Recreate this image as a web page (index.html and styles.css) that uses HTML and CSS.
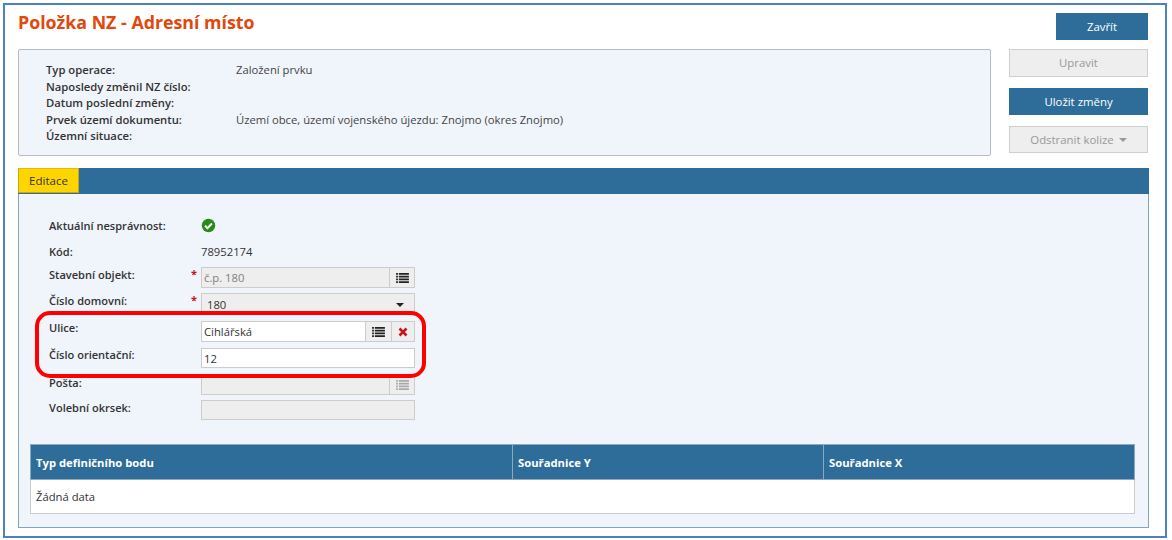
FILE: index.html
```html
<!DOCTYPE html>
<html lang="cs">
<head>
<meta charset="utf-8">
<title>Položka NZ - Adresní místo</title>
<link rel="stylesheet" href="styles.css">
</head>
<body>
<svg class="defs" width="0" height="0" aria-hidden="true">
  <symbol id="list" viewBox="0 0 14 12"><path d="M0 1h2v2H0zM3 1h11v2H3zM0 4h2v2H0zM3 4h11v2H3zM0 7h2v2H0zM3 7h11v2H3zM0 10h2v2H0zM3 10h11v2H3z"/></symbol>
</svg>
<main class="frame">
  <div class="top">
    <div class="top-left">
      <h1 class="title">Položka NZ - Adresní místo</h1>
      <section class="info">
        <div class="lbl">Typ operace:</div><div class="val">Založení prvku</div>
        <div class="lbl">Naposledy změnil NZ číslo:</div><div class="val"></div>
        <div class="lbl">Datum poslední změny:</div><div class="val"></div>
        <div class="lbl">Prvek území dokumentu:</div><div class="val">Území obce, území vojenského újezdu: Znojmo (okres Znojmo)</div>
        <div class="lbl">Územní situace:</div><div class="val"></div>
      </section>
    </div>
    <div class="actions">
      <button class="btn primary close">Zavřít</button>
      <button class="btn disabled tall">Upravit</button>
      <button class="btn primary">Uložit změny</button>
      <button class="btn disabled">Odstranit kolize <span class="caret"></span></button>
    </div>
  </div>
  <section class="panel">
    <div class="tabbar"><div class="tab">Editace</div></div>
    <div class="panel-body">
      <div class="form">
        <div class="f-lbl">Aktuální nesprávnost:</div>
        <div class="f-val">
          <svg class="ok" viewBox="0 0 16 16"><circle cx="8" cy="8" r="7.2" fill="#2a8a1c"/><path d="M4.3 8.2l2.6 2.6 4.8-5" fill="none" stroke="#fff" stroke-width="2.2"/></svg>
        </div>
        <div class="f-lbl">Kód:</div><div class="f-val">78952174</div>
        <div class="f-lbl req">Stavební objekt:</div>
        <div class="group">
          <div class="input ro grow">č.p. 180</div>
          <div class="addon"><svg class="ic"><use href="#list"/></svg></div>
        </div>
        <div class="f-lbl req">Číslo domovní:</div>
        <div class="select"><span>180</span><span class="caret dark"></span></div>
        <div class="f-lbl raised">Ulice:</div>
        <div class="group">
          <div class="input grow">Cihlářská</div>
          <div class="addon wide"><svg class="ic"><use href="#list"/></svg></div>
          <div class="addon narrow"><svg class="x" viewBox="0 0 10 10"><path d="M1.5 1.5l7 7M8.5 1.5l-7 7" stroke="#c9141a" stroke-width="2.6"/></svg></div>
        </div>
        <div class="f-lbl raised">Číslo orientační:</div>
        <div class="group short"><div class="input grow">12</div></div>
        <div class="f-lbl lowered">Pošta:</div>
        <div class="group">
          <div class="input ro grow"></div>
          <div class="addon off"><svg class="ic"><use href="#list"/></svg></div>
        </div>
        <div class="f-lbl">Volební okrsek:</div>
        <div class="group short"><div class="input ro grow"></div></div>
      </div>
      <table class="grid">
        <colgroup><col class="c1"><col class="c2"><col></colgroup>
        <thead><tr><th>Typ definičního bodu</th><th>Souřadnice Y</th><th>Souřadnice X</th></tr></thead>
        <tbody><tr><td colspan="3">Žádná data</td></tr></tbody>
      </table>
    </div>
  </section>
  <div class="highlight"></div>
</main>
</body>
</html>
```
FILE: styles.css
```css
* { box-sizing: border-box; }
html, body { margin: 0; padding: 0; background: #fff; }
body {
  width: 1172px;
  height: 540px;
  overflow: hidden;
  padding: 3px 5px 2px 3px;
  font-family: "Open Sans", "Noto Sans", sans-serif;
  font-size: 11.25px;
  line-height: 16px;
  color: #333;
}
.defs { position: absolute; }
.frame {
  position: relative;
  width: 1164px;
  height: 535px;
  border: 2px solid #4f81bd;
  padding: 4px 17px 0 13px;
}
.top { display: flex; justify-content: space-between; }
.top-left { width: 973px; }
.title {
  margin: 0 0 14px;
  height: 26px;
  font-size: 17.8px;
  line-height: 26px;
  font-weight: 700;
  color: #e2470c;
}
.info {
  height: 107px;
  padding: 12px 0 0 27px;
  background: #f0f4fb;
  border: 1px solid #b8bcc0;
  border-radius: 2px;
  display: grid;
  grid-template-columns: 190px 1fr;
  grid-auto-rows: 16.5px;
  align-content: start;
}
.lbl { font-weight: 600; color: #333; white-space: nowrap; }
.val { color: #444; white-space: nowrap; }
.actions {
  width: 139px;
  padding-top: 4px;
  display: flex;
  flex-direction: column;
  align-items: flex-end;
}
.btn {
  width: 139px;
  height: 27px;
  margin: 0 0 11px;
  padding: 0;
  font: inherit;
  font-size: 11.4px;
  border: 1px solid #c8c8c8;
  border-radius: 0;
}
.btn.primary { background: #2e6d99; color: #fff; border-color: #2e6d99; }
.btn.disabled { background: #eee; color: #999; border-color: #cfcfcf; }
.btn.close { width: 92px; margin-bottom: 9px; }
.btn.tall { height: 28px; }
.caret {
  display: inline-block;
  width: 0; height: 0;
  margin-left: 2px;
  vertical-align: 2px;
  border: 4px solid transparent;
  border-top-color: #999;
  border-bottom-width: 0;
}
.caret.dark { border-top-color: #222; border-width: 4px 4.5px 0; margin: 0; vertical-align: 0; }
.panel {
  margin-top: 4px;
  width: 1131px;
  height: 360px;
  background: #f0f4fb;
  border: 1px solid #7ea6c6;
  border-top: 0;
}
.tabbar {
  height: 26px;
  background: #2e6d99;
  padding-top: 0;
  margin: 0 -1px;
}
.tab {
  width: 61px;
  height: 25px;
  background: #ffd500;
  border: 1px solid #c9a90a;
  border-top-color: #e0bd00;
  color: #333;
  font-size: 11.5px;
  text-align: center;
  line-height: 23px;
}
.panel-body { padding: 24px 12px 0 11px; }
.form {
  display: grid;
  grid-template-columns: 152px 214px;
  grid-template-rows: 26px 23px 26px 28px 27px 26px 26px 20px;
  margin-left: 19px;
}
.f-lbl { position: relative; font-weight: 600; font-size: 11.05px; color: #333; }
.f-lbl.raised { margin-top: -1px; }
.f-lbl.lowered { margin-top: 1px; }
.f-lbl.req::after {
  content: "*";
  position: absolute;
  left: 142px;
  top: -1px;
  color: #d0121b;
  font-weight: 700;
}
.f-val { color: #333; }
.ok { display: block; width: 15px; height: 15px; margin-top: 0; }
.group { display: flex; height: 21px; }
.group.short { height: 20px; }
.input {
  height: 100%;
  border: 1px solid #ccc;
  background: #fff;
  color: #333;
  padding: 2px 2px 0;
  line-height: 16px;
}
.input.ro { background: #eee; color: #808080; }
.grow { flex: 1; }
.addon {
  width: 26px;
  height: 100%;
  margin-left: -1px;
  background: #eee;
  border: 1px solid #ccc;
  display: flex;
  align-items: center;
  justify-content: center;
  color: #222;
}
.addon.wide { width: 27px; }
.addon.narrow { width: 24px; }
.addon.off { color: #aaa; }
.ic { width: 13px; height: 11px; fill: currentColor; }
.x { width: 10px; height: 10px; }
.select {
  height: 21px;
  background: #eee;
  border: 1px solid #ccc;
  padding: 2px 10px 0 5px;
  display: flex;
  justify-content: space-between;
  align-items: center;
  color: #333;
}
.grid {
  width: 1105px;
  margin-top: 24px;
  border-collapse: collapse;
  table-layout: fixed;
  background: #fff;
}
.c1 { width: 482px; }
.c2 { width: 311px; }
.grid th {
  height: 35px;
  padding: 1px 5px 0;
  text-align: left;
  background: #2e6d99;
  color: #fff;
  font-weight: 700;
  border: 1px solid #8da9bf;
}
.grid td {
  height: 34px;
  padding: 0 5px;
  border: 1px solid #ccc;
  color: #333;
}
.highlight {
  position: absolute;
  left: 30px;
  top: 306px;
  width: 391px;
  height: 67px;
  border: 4px solid #f00;
  border-radius: 15px;
}
```
